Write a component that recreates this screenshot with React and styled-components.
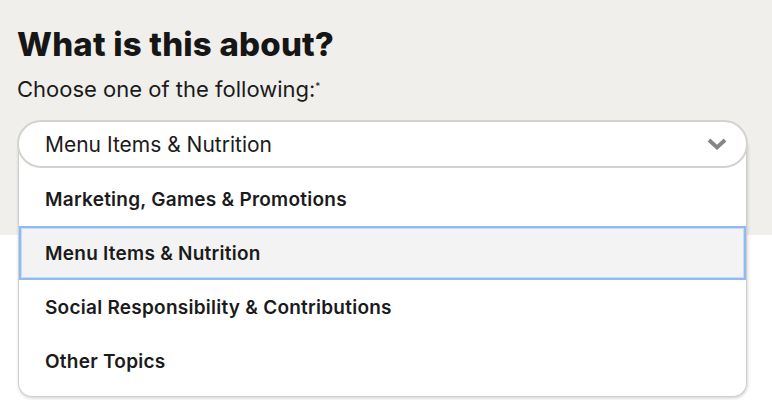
import React from 'react';
import styled, { createGlobalStyle } from 'styled-components';

const GlobalStyle = createGlobalStyle`
  html, body {
    margin: 0;
    padding: 0;
    background: #ffffff;
  }
  body {
    font-family: Inter, "Noto Sans", "Liberation Sans", sans-serif;
    color: #1b1b1b;
  }
`;

const Page = styled.div`
  width: 772px;
  height: 400px;
  position: relative;
  overflow: hidden;
  background: #ffffff;
`;

const Section = styled.section`
  background: #f0efeb;
  height: 235px;
  padding: 24px 25px 0 17px;
  box-sizing: border-box;
`;

const Title = styled.h2`
  margin: 0;
  font-size: 33px;
  line-height: 40px;
  font-weight: 800;
  color: #161616;
  letter-spacing: 0.2px;
`;

const Label = styled.div`
  margin-top: 12px;
  font-size: 22px;
  line-height: 26px;
  font-weight: 400;
  color: #1b1b1b;
  sup {
    font-size: 10px;
    vertical-align: top;
    position: relative;
    top: -3px;
  }
`;

const SelectWrap = styled.div`
  position: relative;
  margin-top: 18px;
  width: 731px;
`;

const SelectBox = styled.div`
  position: relative;
  z-index: 2;
  height: 48px;
  box-sizing: border-box;
  border: 2px solid #d3d2cd;
  border-radius: 24px;
  background: #ffffff;
  display: flex;
  align-items: center;
  justify-content: space-between;
  padding: 0 18px 0 26px;
  font-size: 21px;
  color: #1b1b1b;
`;

const Chevron = () => (
  <svg width="22" height="14" viewBox="0 0 22 14">
    <path d="M3 3 L11 10.5 L19 3" fill="none" stroke="#858585" strokeWidth="3.8" strokeLinecap="butt" />
  </svg>
);

const Menu = styled.ul`
  position: absolute;
  z-index: 1;
  top: 24px;
  left: 1px;
  right: 1px;
  margin: 0;
  padding: 28px 0 8px;
  list-style: none;
  background: #ffffff;
  border: 1px solid #cfcec9;
  border-top: none;
  border-radius: 0 0 14px 14px;
  box-shadow: 0 2px 3px rgba(0, 0, 0, 0.12), 2px 0 3px rgba(0, 0, 0, 0.06);
`;

const Option = styled.li`
  height: 54px;
  box-sizing: border-box;
  display: flex;
  align-items: center;
  padding-left: 24px;
  font-size: 19px;
  font-weight: 600;
  letter-spacing: 0.25px;
  color: #1b1b1b;
  background: ${({ $active }) => ($active ? '#f3f3f3' : 'transparent')};
  border: 2px solid ${({ $active }) => ($active ? '#8fbaf3' : 'transparent')};
  box-shadow: ${({ $active }) => ($active ? 'inset 0 0 0 1px #c6dcfa' : 'none')};
`;

const options = [
  'Marketing, Games & Promotions',
  'Menu Items & Nutrition',
  'Social Responsibility & Contributions',
  'Other Topics',
];

export default function App() {
  return (
    <Page>
      <GlobalStyle />
      <Section>
        <Title>What is this about?</Title>
        <Label>
          Choose one of the following:<sup>*</sup>
        </Label>
        <SelectWrap>
          <SelectBox>
            <span>Menu Items &amp; Nutrition</span>
            <Chevron />
          </SelectBox>
          <Menu>
            {options.map((o) => (
              <Option key={o} $active={o === 'Menu Items & Nutrition'}>
                {o}
              </Option>
            ))}
          </Menu>
        </SelectWrap>
      </Section>
    </Page>
  );
}
